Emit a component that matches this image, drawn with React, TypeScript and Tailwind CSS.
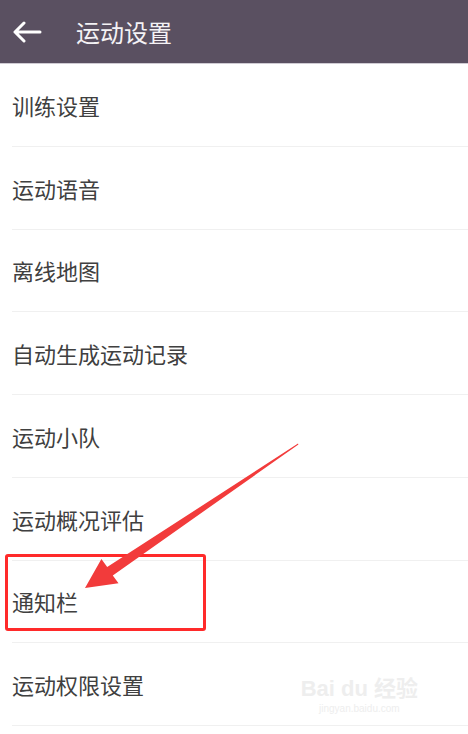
import React from "react";

const items = [
  "训练设置",
  "运动语音",
  "离线地图",
  "自动生成运动记录",
  "运动小队",
  "运动概况评估",
  "通知栏",
  "运动权限设置",
];

export default function App() {
  return (
    <div
      className="relative w-[468px] h-[734px] overflow-hidden bg-white"
      style={{ fontFamily: '"Noto Sans CJK SC", "Noto Sans", sans-serif' }}
    >
      <div className="h-[64px] bg-[#5a5061] flex items-center border-b border-[#cfcbd3]">
        <svg width="30" height="22" viewBox="0 0 30 22" className="ml-[12px]">
          <path d="M28 11H3M12 2L3 11L12 20" stroke="#ffffff" strokeWidth="3" fill="none" strokeLinecap="round" strokeLinejoin="round" />
        </svg>
        <div className="ml-[34px] text-[24px] text-[#f4f2f5] leading-none">运动设置</div>
      </div>
      <div className="flex flex-col">
        {items.map((t) => (
          <div key={t} className="h-[82.75px] ml-[12px] border-b border-[#f0f0f0] flex items-center">
            <span className="text-[22px] text-[#404040] leading-none">{t}</span>
          </div>
        ))}
      </div>
      <div className="absolute left-[5px] top-[554px] w-[201px] h-[77px] border-[3px] border-[#ff2a2a] rounded-[3px]" />
      <svg className="absolute left-0 top-0" width="468" height="734" viewBox="0 0 468 734">
        <polygon
          points="298,443.6 298.4,444.5 112.8,575.4 118.5,583.2 85,588 101.4,558.9 107.2,567.1"
          fill="#f23b3b"
        />
      </svg>
      <div className="absolute right-[50px] top-[678px] flex flex-col items-center text-[#eeeeee]">
        <div className="text-[22px] leading-none font-bold" style={{ fontFamily: '"Liberation Sans", "Noto Sans CJK SC", sans-serif' }}>Bai du 经验</div>
        <div className="text-[10px] leading-none mt-[4px]" style={{ fontFamily: '"Liberation Sans", sans-serif' }}>jingyan.baidu.com</div>
      </div>
    </div>
  );
}
